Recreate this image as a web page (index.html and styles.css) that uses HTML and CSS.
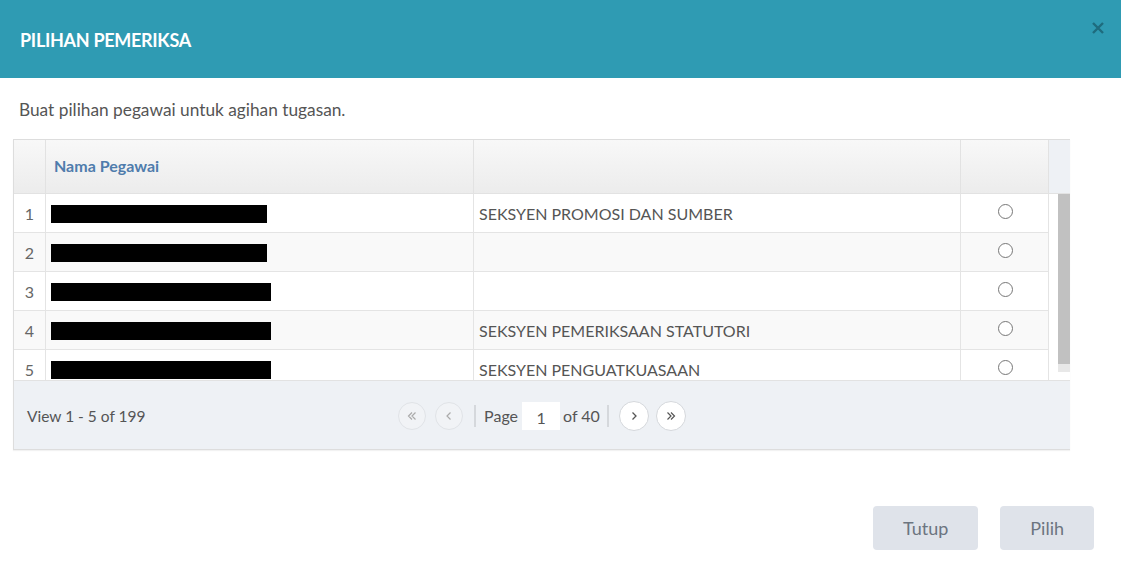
FILE: index.html
```html
<!DOCTYPE html>
<html lang="ms">
<head>
    <meta charset="UTF-8">
    <meta name="viewport" content="width=device-width, initial-scale=1.0">
    <title>Pilihan Pemeriksa</title>
    <link rel="stylesheet" href="styles.css">
</head>
<body>
    <div class="modal">
        <div class="modal-header">
            <h1 class="modal-title">PILIHAN PEMERIKSA</h1>
            <span class="close">
                <svg width="12" height="12" viewBox="0 0 12 12">
                    <path d="M1 1 L11 11 M11 1 L1 11" stroke="#1e6c7e" stroke-width="2.4" fill="none"/>
                </svg>
            </span>
        </div>

        <div class="modal-body">
            <p class="intro">Buat pilihan pegawai untuk agihan tugasan.</p>

            <div class="grid">
                <div class="grid-head">
                    <div class="col-num"></div>
                    <div class="col-name"><span class="head-label">Nama Pegawai</span></div>
                    <div class="col-dept"></div>
                    <div class="col-pick"></div>
                    <div class="col-fill"></div>
                </div>

                <div class="grid-body">
                    <div class="rows">
                        <div class="row">
                            <div class="col-num">1</div>
                            <div class="col-name"><span class="redact" style="width: 216px"></span></div>
                            <div class="col-dept">SEKSYEN PROMOSI DAN SUMBER</div>
                            <div class="col-pick"><span class="radio"></span></div>
                        </div>
                        <div class="row alt">
                            <div class="col-num">2</div>
                            <div class="col-name"><span class="redact" style="width: 216px"></span></div>
                            <div class="col-dept"></div>
                            <div class="col-pick"><span class="radio"></span></div>
                        </div>
                        <div class="row">
                            <div class="col-num">3</div>
                            <div class="col-name"><span class="redact" style="width: 220px"></span></div>
                            <div class="col-dept"></div>
                            <div class="col-pick"><span class="radio"></span></div>
                        </div>
                        <div class="row alt">
                            <div class="col-num">4</div>
                            <div class="col-name"><span class="redact" style="width: 220px"></span></div>
                            <div class="col-dept">SEKSYEN PEMERIKSAAN STATUTORI</div>
                            <div class="col-pick"><span class="radio"></span></div>
                        </div>
                        <div class="row">
                            <div class="col-num">5</div>
                            <div class="col-name"><span class="redact" style="width: 220px"></span></div>
                            <div class="col-dept">SEKSYEN PENGUATKUASAAN</div>
                            <div class="col-pick"><span class="radio"></span></div>
                        </div>
                    </div>
                    <div class="scrollbar">
                        <div class="thumb"></div>
                    </div>
                </div>

                <div class="pager">
                    <div class="pager-info">View 1 - 5 of 199</div>
                    <div class="pager-nav">
                        <span class="pg-btn disabled first">
                            <svg width="10" height="10" viewBox="0 0 10 10"><path d="M5 1.5 L1.5 5 L5 8.5 M8.5 1.5 L5 5 L8.5 8.5" stroke="#aaa" stroke-width="1.2" fill="none"/></svg>
                        </span>
                        <span class="pg-btn disabled">
                            <svg width="10" height="10" viewBox="0 0 10 10"><path d="M6.5 1.5 L3 5 L6.5 8.5" stroke="#aaa" stroke-width="1.2" fill="none"/></svg>
                        </span>
                        <span class="sep"></span>
                        <span class="pg-text">Page</span>
                        <span class="pg-input">1</span>
                        <span class="pg-text">of 40</span>
                        <span class="sep right"></span>
                        <span class="pg-btn next">
                            <svg width="10" height="10" viewBox="0 0 10 10"><path d="M3.5 1.5 L7 5 L3.5 8.5" stroke="#555" stroke-width="1.3" fill="none"/></svg>
                        </span>
                        <span class="pg-btn last">
                            <svg width="10" height="10" viewBox="0 0 10 10"><path d="M1.5 1.5 L5 5 L1.5 8.5 M5 1.5 L8.5 5 L5 8.5" stroke="#555" stroke-width="1.2" fill="none"/></svg>
                        </span>
                    </div>
                    <div></div>
                </div>
            </div>
        </div>

        <div class="modal-footer">
            <button class="btn" type="button">Tutup</button>
            <button class="btn" type="button">Pilih</button>
        </div>
    </div>
</body>
</html>
```

FILE: styles.css
```css
* {
    box-sizing: border-box;
}
body {
    margin: 0;
    font-family: Lato, "Open Sans", sans-serif;
    background-color: #fff;
    color: #555;
}
.modal {
    width: 1121px;
    height: 567px;
    display: flex;
    flex-direction: column;
}
.modal-header {
    height: 78px;
    flex-shrink: 0;
    background-color: #2f9bb3;
    display: flex;
    align-items: center;
    padding: 0 17px 0 20px;
    position: relative;
}
.modal-title {
    margin: 0;
    margin-top: 1px;
    font-size: 18px;
    font-weight: 700;
    color: #fff;
    letter-spacing: -0.3px;
}
.close {
    position: absolute;
    right: 17px;
    top: 22px;
    line-height: 0;
}
.modal-body {
    padding: 0 0 0 13px;
}
.intro {
    margin: 21px 0 18px 6px;
    font-size: 17.3px;
    line-height: 22px;
    color: #555;
}
.grid {
    width: 1057px;
    border: 1px solid #ddd;
    border-right: none;
    box-shadow: 0 1px 1px rgba(0, 0, 0, 0.05);
}
.grid-head {
    display: flex;
    height: 54px;
    background: linear-gradient(#f8f8f8, #ececec);
    border-bottom: 1px solid #e2e2e2;
}
.grid-head > div {
    border-right: 1px solid #e2e2e2;
}
.grid-head .col-fill {
    flex: 1;
    border-right: none;
    background-color: #eef1f5;
}
.col-num {
    width: 32px;
    text-align: center;
}
.col-name {
    width: 428px;
}
.col-dept {
    width: 487px;
}
.col-pick {
    width: 88px;
    text-align: center;
}
.head-label {
    display: block;
    padding: 16px 0 0 8px;
    font-size: 16px;
    font-weight: 700;
    color: #4f7cac;
}
.grid-body {
    display: flex;
    height: 186px;
}
.rows {
    width: 1035px;
    height: 186px;
    overflow: hidden;
}
.row {
    display: flex;
    height: 39px;
    border-bottom: 1px solid #e4e4e4;
    background-color: #fff;
    font-size: 16px;
    color: #555;
}
.row.alt {
    background-color: #f9f9f9;
}
.row > div {
    border-right: 1px solid #e4e4e4;
    display: flex;
    align-items: center;
    padding-top: 1px;
}
.row .col-num {
    justify-content: center;
    color: #666;
}
.row .col-dept {
    padding-left: 5px;
}
.row .col-pick {
    justify-content: center;
    padding-top: 0;
    padding-bottom: 4px;
    padding-left: 2px;
}
.redact {
    display: block;
    height: 18px;
    margin-left: 5px;
    background-color: #000;
}
.radio {
    width: 15px;
    height: 15px;
    border: 1px solid #777;
    border-radius: 50%;
    background-color: #fff;
}
.scrollbar {
    width: 21px;
    padding-left: 9px;
    background-color: #fff;
}
.thumb {
    height: 178px;
    background-color: #c1c1c1;
    border-bottom: 8px solid #e8e8e8;
}
.pager {
    height: 69px;
    background-color: #eef1f5;
    border-top: 1px solid #e2e2e2;
    display: grid;
    grid-template-columns: 1fr auto 1fr;
    align-items: center;
    font-size: 16px;
}
.pager-info {
    padding-left: 13px;
    padding-top: 1px;
    font-size: 15.5px;
    color: #555;
}
.pager-nav {
    display: flex;
    align-items: center;
    padding-top: 1px;
}
.pg-btn {
    width: 28px;
    height: 28px;
    border: 1px solid #d5d8dc;
    border-radius: 50%;
    background-color: #fff;
    display: flex;
    align-items: center;
    justify-content: center;
}
.pg-btn.disabled {
    background-color: #f1f3f6;
    border-color: #e0e3e7;
}
.pg-btn.first {
    margin-right: 9px;
}
.pg-btn.next,
.pg-btn.last {
    width: 30px;
    height: 30px;
}
.pg-btn.next {
    margin-right: 7px;
}
.sep {
    width: 2px;
    height: 22px;
    background-color: #d5d8dc;
    margin: 0 8px 0 11px;
}
.sep.right {
    margin: 0 10px 0 7px;
}
.pg-text {
    color: #555;
}
.pg-input {
    width: 38px;
    height: 28px;
    background-color: #fff;
    margin: 0 3px 0 4px;
    text-align: center;
    line-height: 32px;
}
.modal-footer {
    margin-top: auto;
    display: flex;
    justify-content: flex-end;
    gap: 22px;
    padding: 0 27px 17px 0;
}
.btn {
    height: 44px;
    padding: 0 30px;
    border: none;
    border-radius: 4px;
    background-color: #dfe3ea;
    color: #6c7580;
    font-family: Lato, "Open Sans", sans-serif;
    font-size: 18px;
}
```
